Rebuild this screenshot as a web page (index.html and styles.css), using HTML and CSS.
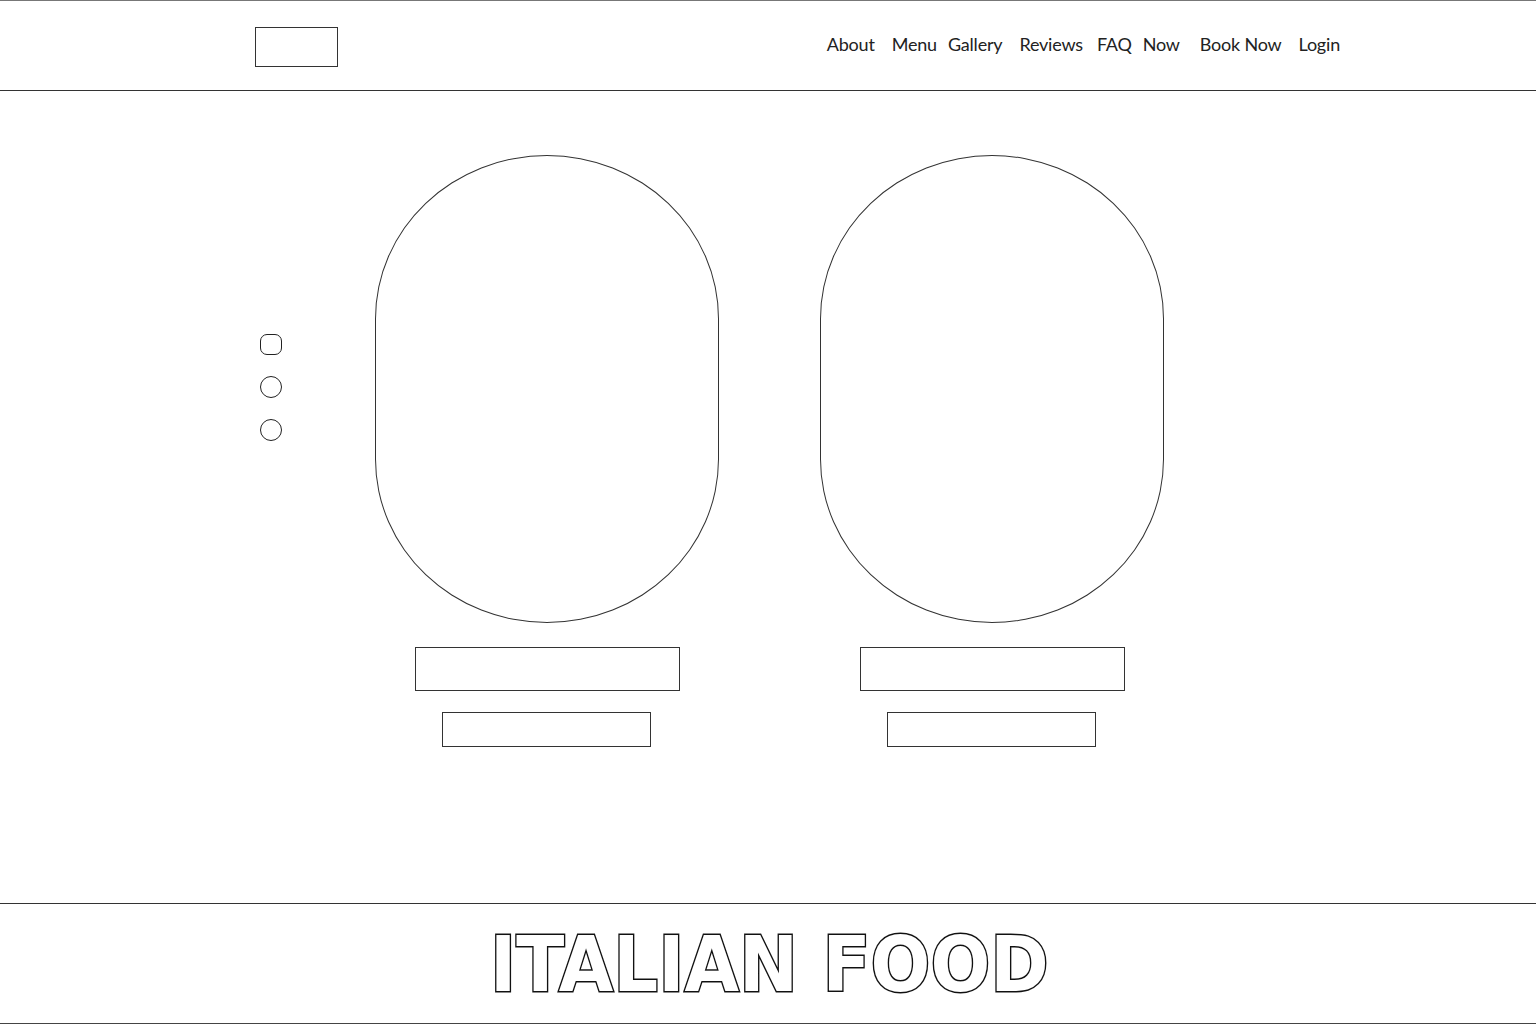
FILE: index.html
```html
<!DOCTYPE html>
<html lang="en">
<head>
<meta charset="utf-8">
<title>Italian Food</title>
<link rel="stylesheet" href="styles.css">
</head>
<body>
<div class="page">
  <header class="site-header">
    <div class="logo"></div>
    <nav class="nav">
      <a class="nav-link" href="#">About</a>
      <a class="nav-link nav-tight" href="#">Menu</a>
      <a class="nav-link" href="#">Gallery</a>
      <a class="nav-link nav-mid" href="#">Reviews</a>
      <a class="nav-link nav-tight" href="#">FAQ</a>
      <a class="nav-link nav-wide" href="#">Now</a>
      <a class="nav-link" href="#">Book Now</a>
      <a class="nav-link" href="#">Login</a>
    </nav>
  </header>
  <main class="hero">
    <div class="dots">
      <span class="dot dot-active"></span>
      <span class="dot"></span>
      <span class="dot"></span>
    </div>
    <div class="cards">
      <div class="card">
        <div class="oval"></div>
        <div class="bar bar-title"></div>
        <div class="bar bar-sub"></div>
      </div>
      <div class="card">
        <div class="oval"></div>
        <div class="bar bar-title"></div>
        <div class="bar bar-sub"></div>
      </div>
    </div>
  </main>
  <footer class="site-footer">
    <h1 class="brand">ITALIAN FOOD</h1>
  </footer>
</div>
</body>
</html>
```
FILE: styles.css
```css
* { box-sizing: border-box; }
html, body { margin: 0; padding: 0; background: #fff; }
body { font-family: "Lato", "Noto Sans", sans-serif; color: #222; }

.page {
  width: 1536px;
  height: 1024px;
  border-top: 1px solid #777;
  display: flex;
  flex-direction: column;
}

.site-header {
  height: 90px;
  border-bottom: 1px solid #333;
  display: flex;
  align-items: center;
  justify-content: space-between;
  padding: 0 196px 0 255px;
}
.logo {
  width: 83px;
  height: 40px;
  border: 1.5px solid #333;
  margin-top: 2px;
}
.nav {
  display: flex;
  align-items: center;
  gap: 17px;
  margin-top: -3px;
}
.nav-link {
  font-family: "Lato", sans-serif;
  font-size: 18px;
  font-weight: 400;
  color: #222;
  text-decoration: none;
  letter-spacing: -0.2px;
}
.nav-tight { margin-right: -6px; }
.nav-mid { margin-right: -3px; }
.nav-wide { margin-right: 3px; }

.hero {
  flex: 1;
  display: flex;
  align-items: flex-start;
  padding: 64px 0 0 259px;
}
.dots {
  width: 23px;
  height: 465px;
  display: flex;
  flex-direction: column;
  justify-content: center;
  align-items: center;
  gap: 21px;
}
.dot {
  width: 22px;
  height: 22px;
  border: 1.5px solid #222;
  border-radius: 50%;
}
.dot-active { border-radius: 7px; height: 21px; }

.cards {
  display: flex;
  gap: 101px;
  margin-left: 93px;
}
.card {
  width: 344px;
  display: flex;
  flex-direction: column;
  align-items: center;
}
.oval {
  width: 344px;
  height: 468px;
  border: 1px solid #333;
  border-radius: 50% / 35%;
}
.bar { border: 1.5px solid #333; }
.bar-title {
  width: 265px;
  height: 44px;
  margin-top: 24px;
}
.bar-sub {
  width: 209px;
  height: 35px;
  margin-top: 21px;
  margin-right: 2px;
}

.site-footer {
  height: 121px;
  border-top: 1px solid #333;
  border-bottom: 1.5px solid #444;
  display: flex;
  align-items: center;
  justify-content: center;
}
.brand {
  margin: 2px 0 0 2px;
  font-family: "DejaVu Sans", sans-serif;
  font-weight: 700;
  font-size: 77px;
  line-height: 1;
  letter-spacing: 0;
  white-space: nowrap;
  color: #fff;
  -webkit-text-stroke: 3px #111;
  paint-order: stroke fill;
  transform: scaleX(0.915);
}
```
